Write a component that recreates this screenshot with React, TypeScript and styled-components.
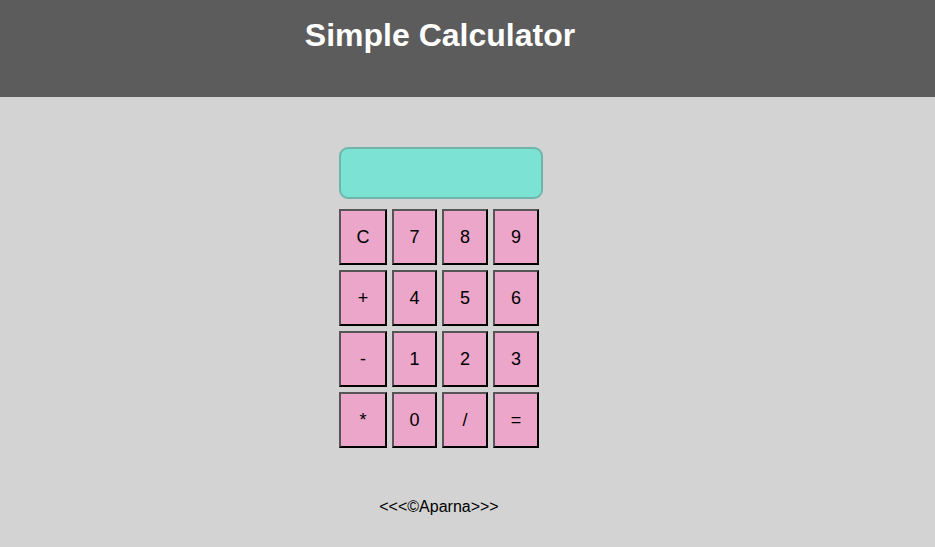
import React from "react";
import styled, { createGlobalStyle } from "styled-components";

const Global = createGlobalStyle`
  html, body { margin: 0; padding: 0; }
  body {
    background: #d3d3d3;
    font-family: "Liberation Sans", Arial, sans-serif;
    width: 935px;
    height: 547px;
    overflow: hidden;
  }
`;

const Header = styled.header`
  height: 97px;
  background: #5c5c5c;
  display: flex;
  justify-content: center;
  padding-right: 55px;
  box-sizing: border-box;
`;

const Title = styled.h1`
  margin: 17px 0 0;
  color: #ffffff;
  font-size: 32px;
  font-weight: bold;
  line-height: 37px;
`;

const Main = styled.main`
  display: flex;
  flex-direction: column;
  align-items: center;
  padding: 50px 53px 0 0;
`;

const Calc = styled.div`
  display: flex;
  flex-direction: column;
  gap: 10px;
  width: 204px;
`;

const Display = styled.div`
  height: 52px;
  box-sizing: border-box;
  background: #7ce3d4;
  border: 2px solid #6fb5ab;
  border-radius: 9px;
`;

const Keys = styled.div`
  display: grid;
  grid-template-columns: 48px 45px 46px 46px;
  grid-auto-rows: 56px;
  column-gap: 5px;
  row-gap: 5px;
`;

const Key = styled.button`
  box-sizing: border-box;
  margin: 0;
  padding: 0;
  background: #eba6c9;
  border-width: 2px;
  border-style: solid;
  border-color: #555555 #000000 #000000 #555555;
  font-family: "Liberation Sans", Arial, sans-serif;
  font-size: 18px;
  color: #000;
`;

const Footer = styled.footer`
  margin-top: 50px;
  font-size: 16px;
  line-height: 18px;
  color: #000;
  padding-right: 4px;
`;

const keys = ["C", "7", "8", "9", "+", "4", "5", "6", "-", "1", "2", "3", "*", "0", "/", "="];

export default function App() {
  return (
    <>
      <Global />
      <Header>
        <Title>Simple Calculator</Title>
      </Header>
      <Main>
        <Calc>
          <Display />
          <Keys>
            {keys.map((k) => (
              <Key key={k}>{k}</Key>
            ))}
          </Keys>
        </Calc>
        <Footer>&lt;&lt;&lt;©Aparna&gt;&gt;&gt;</Footer>
      </Main>
    </>
  );
}
